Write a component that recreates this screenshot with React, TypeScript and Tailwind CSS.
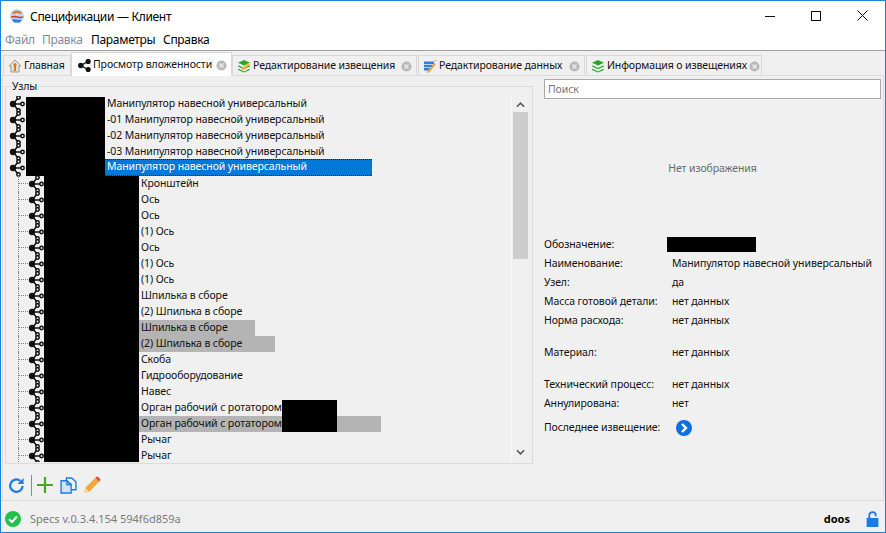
const font = { fontFamily: '"Noto Sans", sans-serif' }

const topRows = [
  { text: 'Манипулятор навесной универсальный' },
  { text: '-01 Манипулятор навесной универсальный' },
  { text: '-02 Манипулятор навесной универсальный' },
  { text: '-03 Манипулятор навесной универсальный' },
  { text: 'Манипулятор навесной универсальный', selected: true },
]

const childRows = [
  { text: 'Кронштейн' },
  { text: 'Ось' },
  { text: 'Ось' },
  { text: '(1) Ось' },
  { text: 'Ось' },
  { text: '(1) Ось' },
  { text: '(1) Ось' },
  { text: 'Шпилька в сборе' },
  { text: '(2) Шпилька в сборе' },
  { text: 'Шпилька в сборе', gray: 'w-[116px]' },
  { text: '(2) Шпилька в сборе', gray: 'w-[136px]' },
  { text: 'Скоба' },
  { text: 'Гидрооборудование' },
  { text: 'Навес' },
  { text: 'Орган рабочий с ротатором', redacted: true },
  { text: 'Орган рабочий с ротатором', redacted: true, gray: 'w-[242px]' },
  { text: 'Рычаг' },
  { text: 'Рычаг' },
]

const details = [
  { label: 'Обозначение:', redacted: true },
  { label: 'Наименование:', value: 'Манипулятор навесной универсальный' },
  { label: 'Узел:', value: 'да' },
  { label: 'Масса готовой детали:', value: 'нет данных' },
  { label: 'Норма расхода:', value: 'нет данных' },
  { label: 'Материал:', value: 'нет данных', gap: 'mt-[13px]' },
  { label: 'Технический процесс:', value: 'нет данных', gap: 'mt-[13px]' },
  { label: 'Аннулирована:', value: 'нет' },
]

function NodeIcon({ className = '' }: { className?: string }) {
  return (
    <svg viewBox="0 0 16 16" className={`w-4 h-4 shrink-0 overflow-visible ${className}`} fill="none" stroke="#111" strokeWidth="1.5">
      <path d="M4 8L9.5 1.5M4 8H13M4 8L9.5 14.5" />
      <circle cx="4" cy="8" r="2.4" fill="#111" />
      <circle cx="9.5" cy="1.5" r="1.7" fill="#f0f0f0" />
      <circle cx="13.5" cy="8" r="1.7" fill="#f0f0f0" />
      <circle cx="9.5" cy="14.5" r="1.7" fill="#f0f0f0" />
    </svg>
  )
}

function ShareIcon() {
  return (
    <svg viewBox="0 0 16 16" className="w-[13px] h-[13px] shrink-0" fill="#111" stroke="#111" strokeWidth="1.6">
      <path d="M3.5 8L12 3M3.5 8L12 13" fill="none" />
      <circle cx="3.5" cy="8" r="2.6" />
      <circle cx="12.5" cy="3" r="2.4" />
      <circle cx="12.5" cy="13" r="2.4" />
    </svg>
  )
}

function CloseDot() {
  return (
    <svg viewBox="0 0 12 12" className="w-[11px] h-[11px] shrink-0">
      <circle cx="6" cy="6" r="5.5" fill="#b9b9b9" />
      <path d="M3.8 3.8L8.2 8.2M8.2 3.8L3.8 8.2" stroke="#eee" strokeWidth="1.3" />
    </svg>
  )
}

function HomeIcon() {
  return (
    <svg viewBox="0 0 14 14" className="w-[14px] h-[14px] shrink-0">
      <path d="M7 1L1 7H3V13H11V7H13Z" fill="#e8e2d8" stroke="#9a8f80" strokeWidth="0.9" />
      <path d="M7 3.5L4.8 6.5H6V12H8V6.5H9.2Z" fill="#d9782a" />
    </svg>
  )
}

function StackIcon({ pencil }: { pencil?: boolean }) {
  return (
    <svg viewBox="0 0 14 14" className="w-[14px] h-[14px] shrink-0">
      <path d="M7 1L13 3.8L7 6.6L1 3.8Z" fill="#2aa52a" />
      <path d="M1.5 6.3L7 8.9L12.5 6.3L13 7.4L7 10.2L1 7.4Z" fill="#2aa52a" />
      <path d="M1.5 9.8L7 12.4L12.5 9.8L13 10.9L7 13.6L1 10.9Z" fill="#2aa52a" />
      {pencil && <path d="M5 9.5L11 4L12.8 5.6L6.8 11L4.6 11.4Z" fill="#f2b632" />}
    </svg>
  )
}

function DataIcon() {
  return (
    <svg viewBox="0 0 14 14" className="w-[14px] h-[14px] shrink-0">
      <path d="M1 2.5H11V5H1ZM1 5.8H10V8.3H1ZM1 9.1H8V11.6H1Z" fill="#2f7fdc" />
      <path d="M4 12.5L11.2 4L13 5.4L6 13.4L3.8 13.8Z" fill="#efa63a" />
      <path d="M11.6 1.5L13 1L13.5 2.6Z" fill="#d94a3a" />
    </svg>
  )
}

function AppLogo() {
  return (
    <svg viewBox="0 0 16 16" className="w-4 h-4">
      <circle cx="8" cy="8" r="7" fill="#bcd9ee" />
      <path d="M3 5C5 2 11 2 13 5L11 6C9 4.5 7 4.5 5 6Z" fill="#e8762c" />
      <path d="M2 8.5C6 6.5 10 10 14.5 8L14 9.6C10 11.5 6 8.6 2.4 10Z" fill="#d4372c" />
      <path d="M3 11.5C6 10.5 10 12.5 13 11.5L11 14.5H5Z" fill="#2f7fdc" />
    </svg>
  )
}

function Tab({ icon, label, width, active, first, last }: { icon: React.ReactNode; label: string; width: string; active?: boolean; first?: boolean; last?: boolean }) {
  return (
    <div
      className={`${width} flex items-center shrink-0 border border-b-0 border-[#d9d9d9] ${last ? 'pr-[1px]' : 'pr-[4px]'} ${
        active ? 'h-[24px] bg-white -mb-px pl-[6px] relative pt-[1px]' : 'h-[20px] bg-[#f0f0f0] pl-[4px] pt-[1px]'
      }`}
    >
      {icon}
      <span className="ml-[2px] flex-1 whitespace-nowrap text-[#111]">{label}</span>
      {!first && <CloseDot />}
    </div>
  )
}

function TreeRowText({ text, selected, gray, redacted }: { text: string; selected?: boolean; gray?: string; redacted?: boolean }) {
  if (selected) {
    return (
      <div className="w-[267px] h-[17px] -mt-px flex items-center pl-[2px] pb-[1px] bg-[#0078d7] text-white border-y border-dotted border-[#222222]">
        {text}
      </div>
    )
  }
  return (
    <div className={`h-4 flex items-center whitespace-nowrap pl-[2px] ${gray ? `${gray} bg-[#b4b4b4]` : ''}`}>
      <span className="pb-[1px]">{text}</span>
      {redacted && <div className="w-[55px] h-4 bg-black shrink-0" />}
    </div>
  )
}

export default function App() {
  return (
    <div style={font} className="w-[886px] h-[533px] flex flex-col overflow-hidden bg-[#f0f0f0] border border-[#1883d7] text-[10.5px] tracking-[-0.1px] text-[#111]">
      {/* Title */}
      <div className="h-[29px] shrink-0 bg-white flex items-center">
        <div className="ml-[8px]">
          <AppLogo />
        </div>
        <span className="ml-[5px] pt-[2px] text-[12px] tracking-[-0.3px] text-black">Спецификации — Клиент</span>
        <div className="ml-auto flex h-full">
          <div className="w-[46px] flex items-center justify-center">
            <svg viewBox="0 0 10 10" className="w-[10px] h-[10px]" stroke="#111" strokeWidth="1"><path d="M0 5.5H10" /></svg>
          </div>
          <div className="w-[46px] flex items-center justify-center">
            <svg viewBox="0 0 10 10" className="w-[10px] h-[10px]" fill="none" stroke="#111" strokeWidth="1"><rect x="0.5" y="0.5" width="9" height="9" /></svg>
          </div>
          <div className="w-[46px] flex items-center justify-center">
            <svg viewBox="0 0 11 11" className="w-[11px] h-[11px]" stroke="#111" strokeWidth="1"><path d="M0.5 0.5L10.5 10.5M10.5 0.5L0.5 10.5" /></svg>
          </div>
        </div>
      </div>

      {/* Menu */}
      <div className="h-[21px] shrink-0 bg-white border-b border-[#a0a0a0] flex items-center pl-[4px] text-[12px] tracking-[-0.3px]">
        <span className="w-[37px] text-[#7f8c99]">Файл</span>
        <span className="w-[49px] text-[#7f8c99]">Правка</span>
        <span className="w-[72px] text-black">Параметры</span>
        <span className="text-black">Справка</span>
      </div>

      {/* Tabs */}
      <div className="h-[24px] shrink-0 flex items-end pl-[2px]">
        <Tab first width="w-[68px]" label="Главная" icon={<HomeIcon />} />
        <Tab active width="w-[161px]" label="Просмотр вложенности" icon={<ShareIcon />} />
        <Tab width="w-[185px]" label="Редактирование извещения" icon={<StackIcon pencil />} />
        <div className="w-px" />
        <Tab width="w-[167px]" label="Редактирование данных" icon={<DataIcon />} />
        <div className="w-px" />
        <Tab last width="w-[176px]" label="Информация о извещениях" icon={<StackIcon />} />
      </div>

      {/* Pane */}
      <div className="h-[426px] shrink-0 mx-px border border-[#dcdcdc] flex">
        <div className="w-[530px] shrink-0 pl-[2px] flex flex-col">
          <div className="relative mt-[10px] h-[378px] border border-[#dcdcdc] flex pt-[9px]">
            <span className="absolute left-[5px] -top-[8px] px-[1px] bg-[#f0f0f0] leading-[14px]">Узлы</span>

            <div className="flex-1 h-[366px] overflow-hidden">
              {topRows.map((row, i) => (
                <div key={i} className="h-4 flex items-start pl-[3px]">
                  <NodeIcon />
                  <div className={`w-[79px] h-4 ml-px shrink-0 ${i === 0 ? 'bg-transparent' : 'bg-black'}`}>
                    {i === 0 && <div className="h-[15px] mt-px bg-black" />}
                  </div>
                  <TreeRowText {...row} />
                </div>
              ))}
              {childRows.map((row, i) => (
                <div key={i} className="h-4 flex items-start pl-[12px]">
                  <div className="w-[10px] h-4 shrink-0 border-l border-dotted border-[#808080]">
                    <div className="h-2 border-b border-dotted border-[#808080]" />
                  </div>
                  <NodeIcon />
                  <div className="w-[95px] h-4 shrink-0 bg-black" />
                  <TreeRowText {...row} />
                </div>
              ))}
            </div>

            {/* Scrollbar */}
            <div className="w-[17px] mr-[4px] h-[365px] shrink-0 border-l border-[#f8f8f8] flex flex-col items-center">
              <svg viewBox="0 0 10 6" className="w-[9px] h-[6px] mt-[6px] mb-[4px]" fill="none" stroke="#555" strokeWidth="1.7">
                <path d="M1 5L5 1L9 5" />
              </svg>
              <div className="w-[15px] h-[147px] bg-[#cdcdcd]" />
              <svg viewBox="0 0 10 6" className="w-[9px] h-[6px] mt-auto mb-[6px]" fill="none" stroke="#555" strokeWidth="1.7">
                <path d="M1 1L5 5L9 1" />
              </svg>
            </div>
          </div>

          {/* Toolbar */}
          <div className="flex-1 flex items-center pl-[3px] pt-[6px]">
            <svg viewBox="0 0 18 18" className="w-[17px] h-[17px]" fill="none" stroke="#1a7ae8" strokeWidth="2.4">
              <path d="M15.5 9.5A6.6 6.6 0 1 1 13 4" />
              <path d="M16.5 1V7.5H10Z" fill="#1a7ae8" stroke="none" />
            </svg>
            <div className="w-px h-[21px] bg-[#8a8a8a] ml-[6px]" />
            <svg viewBox="0 0 16 16" className="w-4 h-4 ml-[5px]" fill="none" stroke="#4aa81e" strokeWidth="2.2">
              <path d="M8 0V16M0 8H16" />
            </svg>
            <svg viewBox="0 0 16 16" className="w-[17px] h-[17px] ml-[7px]" fill="none" stroke="#1a7ae8" strokeWidth="1.3">
              <path d="M6 3V1H11L15 4.5V12H11" />
              <path d="M1 3.5H6.5L10.5 7V15H1Z" fill="#cfe4fb" />
              <path d="M6.5 3.5V7H10.5" />
            </svg>
            <svg viewBox="0 0 17 17" className="w-[18px] h-[18px] ml-[6px]">
              <path d="M1 16L2.2 11L11.5 1.8L15.2 5.5L6 14.8Z" fill="#f0a83a" />
              <path d="M1 16L2.2 11L6 14.8Z" fill="#f6d9a8" />
              <path d="M12.5 1L14 0.5L16.5 3L16 4.5L15.2 5.5L11.5 1.8Z" fill="#e0553d" />
            </svg>
          </div>
        </div>

        {/* Right column */}
        <div className="flex-1 pl-[11px] pr-[2px] flex flex-col">
          <div className="mt-[3px] h-[20px] border border-[#aaaaaa] bg-white flex items-center pl-[3px] pt-[1px] text-[#757575] shrink-0">Поиск</div>
          <div className="h-[136px] pt-[4px] shrink-0 flex items-center justify-center text-[#6b6b6b]">Нет изображения</div>
          <div className="flex flex-col">
            {details.map((row) => (
              <div key={row.label} className={`h-[19px] flex items-center ${row.gap ?? ''}`}>
                <span className="w-[128px] shrink-0 whitespace-nowrap">{row.label}</span>
                {row.redacted ? <div className="w-[89px] h-[15px] -ml-[5px] bg-black" /> : <span className="whitespace-nowrap">{row.value}</span>}
              </div>
            ))}
            <div className="mt-[5px] h-[19px] flex items-center">
              <span className="w-[132px] shrink-0">Последнее извещение:</span>
              <svg viewBox="0 0 16 16" className="w-4 h-4">
                <circle cx="8" cy="8" r="8" fill="#0f6fe0" />
                <path d="M6 4L10 8L6 12" fill="none" stroke="#fff" strokeWidth="2.4" />
              </svg>
            </div>
          </div>
        </div>
      </div>

      {/* Status */}
      <div className="flex-1 flex items-center pl-[4px] pr-[6px] pt-[5px]">
        <svg viewBox="0 0 16 16" className="w-4 h-4">
          <circle cx="8" cy="8" r="8" fill="#1fc24a" />
          <path d="M4 8.3L7 11L12 5.5" fill="none" stroke="#fff" strokeWidth="2" />
        </svg>
        <span className="ml-[9px] text-[11px] tracking-normal text-[#7b7b7b]">Specs v.0.3.4.154 594f6d859a</span>
        <span className="ml-auto text-[11px] tracking-normal font-bold text-black">doos</span>
        <svg viewBox="0 0 12 15" className="w-[13px] h-4 ml-[16px]" fill="none">
          <path d="M3 7V4A3 3 0 0 1 9 4V5" stroke="#1a7ae8" strokeWidth="1.7" />
          <rect x="0.5" y="6.5" width="11" height="8.5" fill="#1a7ae8" />
        </svg>
      </div>
    </div>
  )
}
